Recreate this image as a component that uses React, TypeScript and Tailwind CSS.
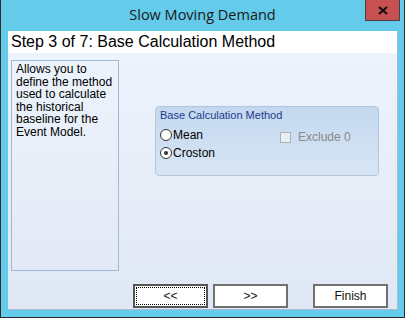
import React from "react";

function Radio({ checked, label }: { checked?: boolean; label: string }) {
  return (
    <div className="flex items-center h-[14px]">
      <div className="w-[12px] h-[12px] rounded-full border border-[#333] bg-white flex items-center justify-center">
        {checked && <div className="w-[4px] h-[4px] rounded-full bg-[#333]" />}
      </div>
      <span className="ml-[1px] text-[12px] leading-[14px] text-black">{label}</span>
    </div>
  );
}

export default function App() {
  return (
    <div
      className="w-[405px] h-[318px] bg-[#65cbea] border-l border-r border-b border-[#2b2b2b] flex flex-col"
      style={{ fontFamily: '"Liberation Sans", Arial, sans-serif' }}
    >
      <div className="relative h-[31px] shrink-0 flex items-start justify-center">
        <span
          className="mt-[5px] text-[14.5px] leading-[20px] text-[#1a1a1a]"
          style={{ fontFamily: '"Open Sans", "Noto Sans", sans-serif' }}
        >
          Slow Moving Demand
        </span>
        <div className="absolute top-0 right-[4px] w-[35px] h-[21px] bg-[#c75050] border border-t-0 border-[#444] flex items-center justify-center">
          <svg width="10" height="9" viewBox="0 0 10 9">
            <path d="M1 1 L9 8 M9 1 L1 8" stroke="#111" strokeWidth="2.2" />
          </svg>
        </div>
      </div>
      <div className="ml-[7px] w-[390px] h-[279px] border-r border-b border-[#a9b9d0] flex flex-col bg-gradient-to-b from-[#eef4fc] to-[#e0e8f5]">
        <div className="h-[22px] bg-white pl-[3px] text-[16px] leading-[22px] text-black shrink-0">
          Step 3 of 7: Base Calculation Method
        </div>
        <div className="flex items-start">
          <div className="ml-[3px] mt-[7px] w-[108px] h-[211px] border border-[#a3b6dc] pl-[4px] pt-[2px] text-[12px] leading-[12.5px] text-black">
            Allows you to
            <br />
            define the method
            <br />
            used to calculate
            <br />
            the historical
            <br />
            baseline for the
            <br />
            Event Model.
          </div>
          <div className="ml-[36px] mt-[53px] w-[224px] h-[70px] rounded-[4px] border border-[#b3c6df] bg-gradient-to-b from-[#c3d8ef] to-[#d8e5f4] pl-[4px] pt-[2px]">
            <div className="text-[11px] leading-[13px] text-[#1e3a8c]">Base Calculation Method</div>
            <div className="flex mt-[6px]">
              <div className="flex flex-col gap-[4px] w-[120px]">
                <Radio label="Mean" />
                <Radio checked label="Croston" />
              </div>
              <div className="flex items-center mt-[2px] h-[14px]">
                <div className="w-[11px] h-[11px] border border-[#b0b0b0] bg-[#e8eef6]" />
                <span className="ml-[7px] text-[12px] leading-[14px] text-[#8a8a8a]">Exclude 0</span>
              </div>
            </div>
          </div>
        </div>
        <div className="flex mt-[13px] ml-[125px] text-[12px]">
          <div className="w-[75px] h-[24px] border-2 border-[#555] bg-white p-[1px]">
            <div className="w-full h-full border border-dotted border-black flex items-center justify-center text-[#111]">
              &lt;&lt;
            </div>
          </div>
          <div className="ml-[5px] w-[75px] h-[24px] border-2 border-[#707070] bg-white flex items-center justify-center text-[#111]">
            &gt;&gt;
          </div>
          <div className="ml-[25px] w-[75px] h-[24px] border-2 border-[#707070] bg-white flex items-center justify-center text-[#111]">
            Finish
          </div>
        </div>
      </div>
    </div>
  );
}
